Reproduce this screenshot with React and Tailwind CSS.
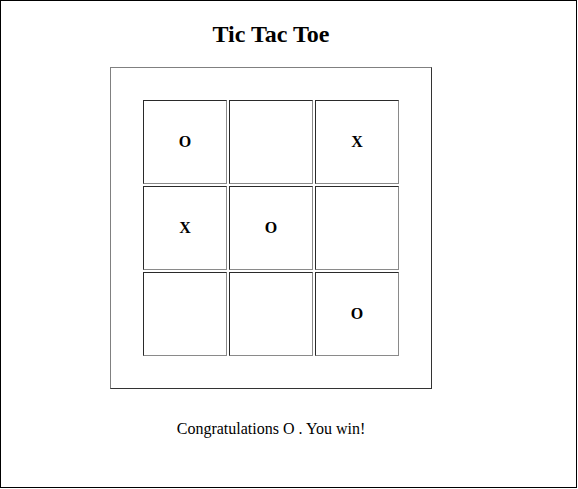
import React from "react";

const board = ["O", "", "X", "X", "O", "", "", "", "O"];

export default function App() {
  return (
    <div
      className="w-[577px] h-[488px] border border-black bg-white text-black"
      style={{ fontFamily: '"Liberation Serif", "Times New Roman", serif' }}
    >
      <div className="w-[540px] flex flex-col items-center">
        <h2 className="mt-[19px] text-[24px] font-bold leading-[28px]">Tic Tac Toe</h2>
        <div className="mt-[19px] w-[322px] h-[322px] border border-t-[#808080] border-l-[#808080] border-r-[#333333] border-b-[#333333] p-[32px]">
          <div className="grid grid-cols-3 gap-[2px]">
            {board.map((v, i) => (
              <div
                key={i}
                className="w-[84px] h-[84px] border border-t-[#2a2a2a] border-l-[#2a2a2a] border-r-[#8a8a8a] border-b-[#8a8a8a] flex items-center justify-center text-[16px] font-bold"
              >
                {v}
              </div>
            ))}
          </div>
        </div>
        <p className="mt-[31px] text-[16px] leading-[18px]">Congratulations O . You win!</p>
      </div>
    </div>
  );
}
